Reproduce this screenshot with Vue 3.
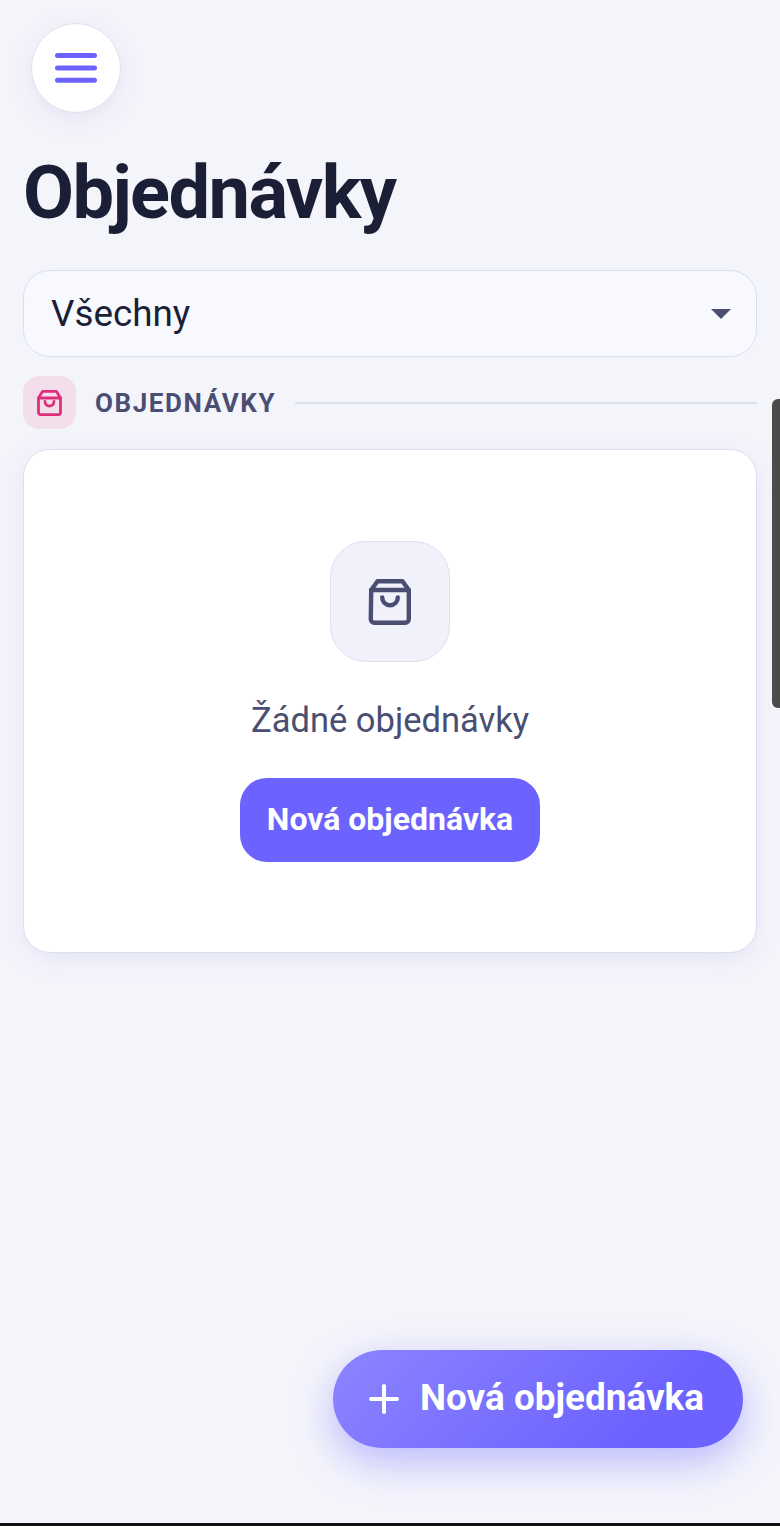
<script setup>
const title = 'Objednávky'
const filter = 'Všechny'
const section = 'OBJEDNÁVKY'
const emptyText = 'Žádné objednávky'
const cta = 'Nová objednávka'
</script>

<template>
  <div class="page">
    <button class="menu" aria-label="Menu">
      <svg width="44" height="44" viewBox="0 0 44 44" fill="none" stroke="#6c63ff" stroke-width="5" stroke-linecap="round">
        <path d="M3.500 9.500h37M3.500 22h37M3.500 34.200h37" />
      </svg>
    </button>
    <h1 class="title">{{ title }}</h1>
    <div class="select">
      <span>{{ filter }}</span>
      <span class="caret"></span>
    </div>
    <div class="section">
      <span class="section-icon">
        <svg width="27" height="27" viewBox="0 0 27 27" fill="none" stroke="#df2f7c" stroke-width="2.800" stroke-linecap="round" stroke-linejoin="round">
          <path d="M2.500 9 6.500 2.400h14l4 6.600v14.600a2 2 0 0 1-2 2h-18a2 2 0 0 1-2-2z" />
          <path d="M2.500 9h22" />
          <path d="M9 12.500a4.500 4.500 0 0 0 9 0" />
        </svg>
      </span>
      <span class="section-label">{{ section }}</span>
      <span class="section-line"></span>
    </div>
    <section class="card">
      <div class="empty-icon">
        <svg width="46" height="46" viewBox="0 0 46 46" fill="none" stroke="#4a4e73" stroke-width="4.400" stroke-linecap="round" stroke-linejoin="round">
          <path d="M4.200 11 10.500 2.200h25l6.300 8.800v29.300a3.500 3.500 0 0 1-3.500 3.500h-31a3.500 3.500 0 0 1-3.500-3.500z" />
          <path d="M4.200 11h37.600" />
          <path d="M15.200 18.500a7.800 7.800 0 0 0 15.600 0" />
        </svg>
      </div>
      <p class="empty-text">{{ emptyText }}</p>
      <button class="primary">{{ cta }}</button>
    </section>
    <div class="scrollbar"></div>
    <button class="fab">
      <svg width="32" height="32" viewBox="0 0 32 32" fill="none" stroke="#fff" stroke-width="4" stroke-linecap="round">
        <path d="M16 3v26M3 16h26" />
      </svg>
      <span class="fab-label">{{ cta }}</span>
    </button>
    <div class="edge"></div>
  </div>
</template>

<style>
html, body { margin: 0; background: #f4f5fb; }
</style>

<style scoped>
.page {
  position: relative;
  box-sizing: border-box;
  width: 780px;
  height: 1526px;
  overflow: hidden;
  padding: 23px 23px 0;
  background: #f4f5fb;
  font-family: Roboto, "Liberation Sans", sans-serif;
  display: flex;
  flex-direction: column;
}
button { font-family: inherit; border: none; padding: 0; }
.menu {
  box-sizing: border-box;
  width: 90px;
  height: 90px;
  margin-left: 8px;
  border-radius: 50%;
  background: #fff;
  border: 1.500px solid #e0e0f0;
  box-shadow: 0 6px 26px rgba(80, 80, 160, 0.1);
  display: flex;
  align-items: center;
  justify-content: center;
  flex: none;
}
.title {
  margin: 40px 0 0;
  font-size: 74px;
  line-height: 80px;
  font-weight: 700;
  letter-spacing: -1.600px;
  color: #1a1f36;
}
.select {
  box-sizing: border-box;
  height: 87px;
  width: 734px;
  margin-top: 37px;
  padding: 0 25px 0 27px;
  display: flex;
  align-items: center;
  justify-content: space-between;
  background: #f8f9ff;
  border: 1.500px solid #dcddee;
  border-radius: 27px;
  font-size: 36.800px;
  color: #1a1f36;
}
.caret {
  width: 0;
  height: 0;
  border-left: 10px solid transparent;
  border-right: 10px solid transparent;
  border-top: 10px solid #4a4e73;
}
.section {
  display: flex;
  align-items: center;
  gap: 19px;
  width: 734px;
  margin-top: 19px;
}
.section-icon {
  width: 53px;
  height: 53px;
  border-radius: 16px;
  background: #f3dfec;
  display: flex;
  align-items: center;
  justify-content: center;
  flex: none;
}
.section-label {
  font-size: 26px;
  font-weight: 700;
  letter-spacing: 1.600px;
  color: #4a4e73;
}
.section-line { flex: 1; height: 2px; background: #dcdeec; }
.card {
  box-sizing: border-box;
  width: 734px;
  height: 504px;
  margin-top: 20px;
  padding-top: 91px;
  background: #fff;
  border: 1.500px solid #dddef0;
  border-radius: 27px;
  box-shadow: 0 6px 26px rgba(90, 90, 190, 0.1);
  display: flex;
  flex-direction: column;
  align-items: center;
}
.empty-icon {
  box-sizing: border-box;
  width: 120px;
  height: 121px;
  border-radius: 36px;
  background: #f0f1fb;
  border: 1.500px solid #dfdfee;
  display: flex;
  align-items: center;
  justify-content: center;
}
.empty-text {
  margin: 36px 0 0;
  font-size: 34.500px;
  line-height: 44px;
  color: #4a4e73;
}
.primary {
  width: 300px;
  height: 84px;
  margin-top: 36px;
  padding-bottom: 3px;
  border-radius: 27px;
  background: #6c63ff;
  color: #fff;
  font-size: 32px;
  font-weight: 700;
}
.scrollbar {
  position: absolute;
  top: 399px;
  right: 0;
  width: 8px;
  height: 309px;
  background: #4a4c4c;
  border-radius: 6px 0 0 6px;
}
.fab {
  position: absolute;
  left: 333px;
  top: 1350px;
  width: 410px;
  height: 98px;
  border-radius: 49px;
  background: linear-gradient(135deg, #8c85ff, #6c63ff 75%);
  color: #fff;
  font-size: 36.900px;
  font-weight: 700;
  box-shadow: 0 14px 40px rgba(108, 99, 255, 0.42);
  display: flex;
  align-items: center;
  gap: 20px;
  padding-left: 35px;
  box-sizing: border-box;
}
.fab-label { padding-bottom: 3px; }
.edge {
  position: absolute;
  left: 0;
  right: 0;
  bottom: 0;
  height: 3px;
  background: #111;
}
</style>
